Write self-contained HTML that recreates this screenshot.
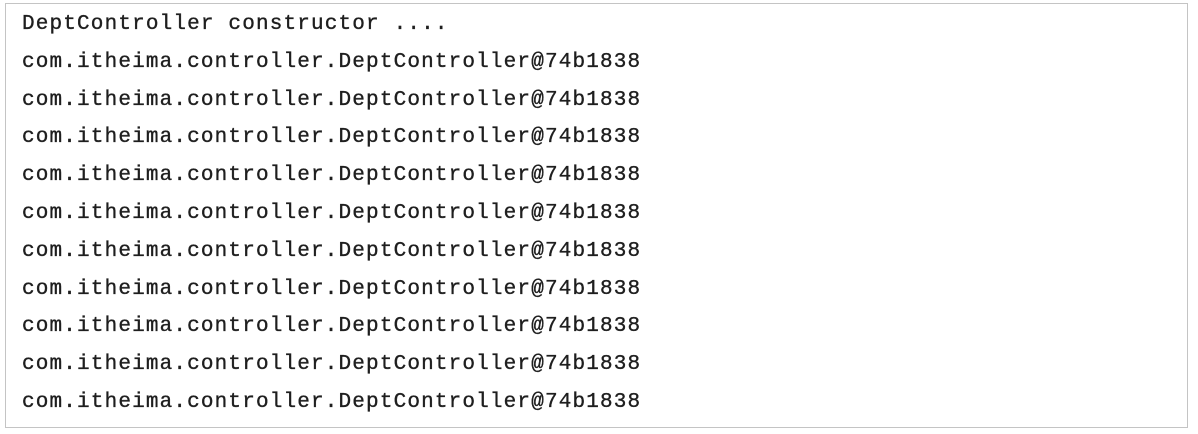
<!DOCTYPE html>
<html><head><meta charset="utf-8"><style>
html,body{margin:0;padding:0;background:#fff;width:1198px;height:434px;overflow:hidden}
.box{position:absolute;left:5px;top:3px;width:1181px;height:423px;border:1px solid #c4c4c4;}
.t{position:absolute;left:22px;top:6px;font-family:"Liberation Mono",monospace;font-size:21px;letter-spacing:1.16px;line-height:37.8px;color:#1e1e1e;white-space:pre;-webkit-text-stroke:0.35px #1e1e1e}
</style></head><body>
<div class="box"></div>
<div class="t">DeptController constructor ....
com.itheima.controller.DeptController@74b1838
com.itheima.controller.DeptController@74b1838
com.itheima.controller.DeptController@74b1838
com.itheima.controller.DeptController@74b1838
com.itheima.controller.DeptController@74b1838
com.itheima.controller.DeptController@74b1838
com.itheima.controller.DeptController@74b1838
com.itheima.controller.DeptController@74b1838
com.itheima.controller.DeptController@74b1838
com.itheima.controller.DeptController@74b1838</div>
</body></html>
